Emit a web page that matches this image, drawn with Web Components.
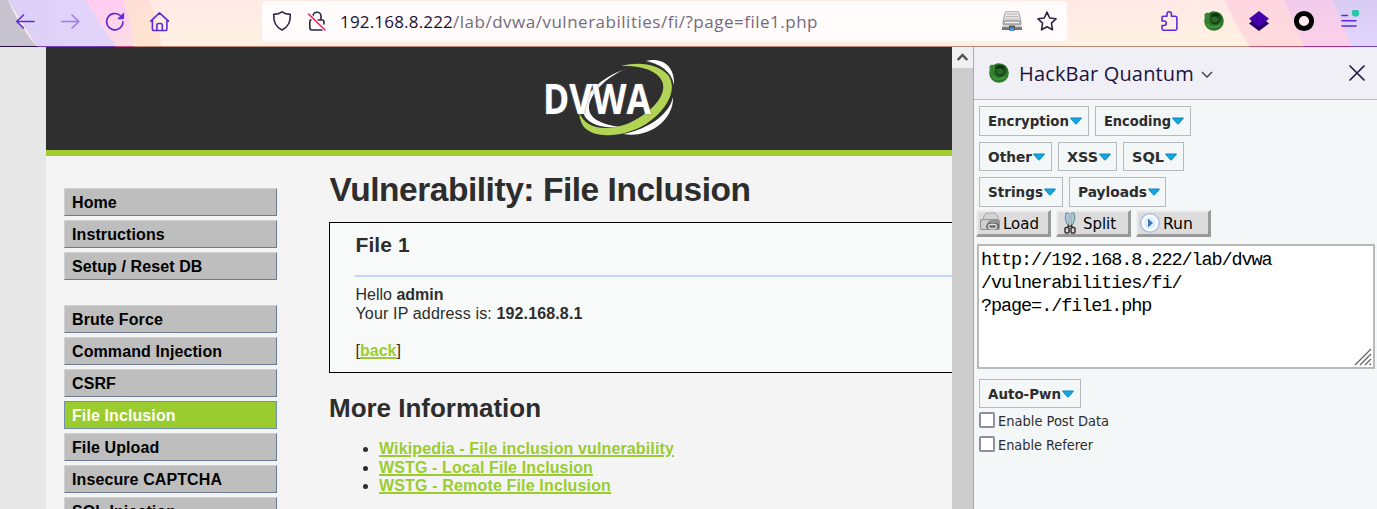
<!DOCTYPE html>
<html lang="en"><head><meta charset="utf-8"><title>DVWA</title>
<style>html,body{margin:0;height:100%;overflow:hidden}body{font-family:"Liberation Sans",Arial,sans-serif}</style></head>
<body><browser-window></browser-window>
<script>
const make=(name,html,after)=>customElements.define(name,class extends HTMLElement{
 connectedCallback(){ if(this.shadowRoot)return;
  const t=document.createElement('template');
  t.innerHTML=typeof html==='function'?html(this):html;
  this.attachShadow({mode:'open'}).append(t.content.cloneNode(true));
  if(after)after(this);
 }});

/* Single line of text fitted to a width, by tracking or, with "scale", by horizontal scaling */
make('fit-text','<style>:host{display:inline-block;white-space:pre;flex:none}span{display:inline-block;transform-origin:0 0}</style><span><slot></slot></span>',el=>{
 const s=el.shadowRoot.querySelector('span'),w=+el.getAttribute('w'),n=el.textContent.length,cur=s.getBoundingClientRect().width;
 el.style.width=w+'px';
 if(el.hasAttribute('scale'))s.style.transform=`scaleX(${w/cur})`;
 else s.style.letterSpacing=((w-cur)/n)+'px';
});

const P='fill="none" stroke="#5b2bd9" stroke-width="1.6" stroke-linecap="round" stroke-linejoin="round"';
const D='fill="none" stroke="#2b2545" stroke-width="1.6" stroke-linecap="round" stroke-linejoin="round"';
const icons={
back:`<g ${P}><path d="M20 11.500H3M9.500 5L2.700 11.500L9.500 18"/></g>`,
forward:`<g ${P} opacity=".5"><path d="M2.500 11.500H19.500M13 5L19.800 11.500L13 18"/></g>`,
reload:`<g ${P}><path d="M16.200 5.500A8.200 8.200 0 1 0 19 11.800"/></g><path d="M19.600 3.200V8.800H13.900z" fill="#5b2bd9" stroke="#5b2bd9" stroke-linejoin="round"/>`,
home:`<g ${P}><path d="M1.700 11.100L10.500 2.900L19.500 11.100M3.400 10V18.700Q3.400 20.500 5.200 20.500H16.100Q17.900 20.500 17.900 18.700V10M7.900 20.500V15.500Q7.900 13.500 9.500 13.500H11.700Q13.300 13.500 13.300 15.500V20.500"/></g>`,
shield:`<g ${D}><path d="M11 1.800C13.500 3.600 16.200 4.300 19.300 4.400C19.600 11 18 16.800 11 20C4 16.800 2.400 11 2.700 4.400C5.800 4.300 8.500 3.600 11 1.800Z"/></g>`,
lock:`<g ${D}><path d="M7 7V6.200A4 4 0 0 1 15 6.200V10M5 9.800Q3.800 10.200 3.800 11.800V17.800Q3.800 20 6 20H16Q18 20 18 18M18 14V12Q18 10 16 10H12"/></g><path d="M2.600 4L19 20" stroke="#fff" stroke-width="3.400"/><path d="M2.600 4L19 20" stroke="#f32050" stroke-width="1.600" stroke-linecap="round"/>`,
drive:`<path d="M3.500 3Q4 1 6 1H16Q18 1 18.500 3L20.500 11V14Q20.500 15.500 19 15.500H3Q1.500 15.500 1.500 14V11Z" fill="#a9a9a9"/><path d="M4.500 3Q5 1.700 6.500 1.700H15.500Q17 1.700 17.500 3L19 10H3Z" fill="#e6e6e6"/><path d="M5.500 4H16.500M5 6.500H17M4.500 9H17.500" stroke="#bbb"/><path d="M4 12.500H18" stroke="#eee" stroke-width="1.400"/><path d="M1 17H21V20H1Z" fill="#737373"/><path d="M1 17H21" stroke="#999"/><path d="M8 15.500H14V20.500H8Z" fill="#555"/><path d="M9 17.500H13V21H9Z" fill="#4795ef"/>`,
star:`<g ${D}><path d="M11 2.200L13.700 8L20 8.800L15.400 13.200L16.500 19.800L11 16.700L5.500 19.800L6.600 13.200L2 8.800L8.300 8Z"/></g>`,
puzzle:`<g ${P} stroke-width="1.5"><path d="M4 11V7.600Q4 6.300 5.300 6.300H9V4A2.200 2.200 0 0 1 13.400 4V6.300H17.300Q18.900 6.300 18.900 7.900V18.600Q18.900 20.200 17.300 20.200H5.600Q4 20.200 4 18.600V15.500H6A2.200 2.200 0 0 0 6 11Z"/></g>`,
orb:`<circle cx="11" cy="11" r="9.800" fill="#2f7a2c"/><path d="M1.500 4L4 2.500L6 3.500L9 1.500L17 3L18 6Q11 3 6 8Q3 12 5 16L2 13Z" fill="#37802f"/><path d="M7 4Q12 1 17 4.500Q19.500 8 18 11Q15 15.500 11 14.500Q7 13 7 9Z" fill="#1b4d1e"/><path d="M9 4Q13 2 17 5L15 7Q11 5 9 7Z" fill="#0f3213"/><path d="M8 8Q11 6 14 7.500L15.500 10Q14 12.500 11.500 12.500Q8 12 9 9.500Z" fill="#2c6b27"/><path d="M7.500 11Q10 15.500 15 12.500" fill="none" stroke="#12371a"/><path d="M4 14Q9 20 17.500 15" fill="none" stroke="#439a3b" stroke-width="1.500"/>`,
layers:`<path d="M1 13.500L4 11H18L21 13.500L11 21Z" fill="#240068"/><path d="M11 1L21 8.700L11 16.800L1 8.700Z" fill="#4500ac"/>`,
ring:`<circle cx="11" cy="11" r="7.600" fill="#ffe9ee" stroke="#000" stroke-width="5"/>`,
menu:`<g ${P} stroke-width="1.5"><path d="M4 5.500H9.500M4 10.800H18M4 16H18"/></g><circle cx="17.500" cy="2.900" r="3.700" fill="#25c7a4"/>`,
print:`<path d="M5 4L7 1H16L19 4V9H4Z" fill="#d2d2d2" stroke="#aaa"/><path d="M1 9Q1 7 3 7H18Q21 7 21 10V16Q21 18 19 18H3Q1 18 1 16Z" fill="#939393"/><path d="M2 10Q2 8 4 8H12Q8 9 8 12V17H3Q2 17 2 15Z" fill="#cfcfcf"/><path d="M9 17Q6 16 7.500 13Q9 10 13 11H17Q20 11 20 14Q20 17 17 17Z" fill="#666"/><rect x="9.500" y="12.500" width="8" height="4" rx="2" fill="none" stroke="#ddd" stroke-width="1.400"/>`,
scissors:`<path d="M7 1Q5 6 7.500 11L10 14L10.500 2Q8.500 0 7 1M15 1Q17 6 14.500 11L12 14L11.500 2Q13.500 0 15 1" fill="#a9c9d6" stroke="#567785" stroke-width=".8"/><path d="M11 2V14" stroke="#fff" stroke-width=".7"/><path d="M9 12L11 14L13 12L14 15H8Z" fill="#444"/><rect x="6" y="15.500" width="4" height="5.500" rx="1.300" fill="none" stroke="#333" stroke-width="1.500"/><rect x="12" y="15.500" width="4" height="5.500" rx="1.300" fill="none" stroke="#333" stroke-width="1.500"/>`,
play:`<circle cx="11" cy="11" r="9.300" fill="#f5f9fe" stroke="#afc3e5" stroke-width="1.600"/><circle cx="11" cy="11" r="7" fill="#e2edfa" stroke="#fff" stroke-width="2"/><path d="M9 6.500L14 11L9 15.500Z" fill="#3d79bd"/>`,
close:`<path d="M4 4L18 18M18 4L4 18" fill="none" stroke="#251c45" stroke-width="1.700" stroke-linecap="round"/>`,
chevron:`<path d="M6 9L11 14L16 9" fill="none" stroke="#3b3355" stroke-width="1.300"/>`,
up:`<path d="M5.700 13L10.500 8L15.300 13" fill="none" stroke="#505050" stroke-width="2.500"/>`
};
make('ui-icon',el=>`<style>:host{display:block;flex:none;width:22px;height:22px}svg{display:block}</style><svg width="22" height="22" viewBox="0 0 22 22">${icons[el.getAttribute('name')]}</svg>`);

make('tool-bar',`<style>
:host{display:grid;height:47px;overflow:hidden}
svg,.row{grid-area:1/1}
.row{display:flex;height:42px;padding-left:2px;z-index:1}
.c{width:45px;display:flex;justify-content:center;padding-top:10px;box-sizing:border-box;flex:none}
.url{margin:1px 79.500px 0 80px;width:805px;height:40px;background:#fffcfb;border-radius:4px;display:flex;align-items:flex-start;padding:9px 9px 0;box-sizing:border-box;flex:none}
.lk{margin-left:13px}.t{margin-left:12px;font:17px/23px "Open Sans","Noto Sans",sans-serif;color:#1b1038}
.dim{color:#736b80}.dr{margin-left:auto}.st{margin-left:13px}
</style>
<svg width="1377" height="47" viewBox="0 0 1377 47"><defs>
<linearGradient id="a" x2="0" y2="1"><stop stop-color="#ffe9e6"/><stop offset="1" stop-color="#fff2e2"/></linearGradient>
<linearGradient id="b"><stop stop-color="#dcd0f6"/><stop offset="1" stop-color="#e3d4fa"/></linearGradient>
<linearGradient id="c" x2="0" y2="1"><stop stop-color="#ffccf2"/><stop offset="1" stop-color="#fddde4"/></linearGradient>
<linearGradient id="d" x2="0" y2="1"><stop stop-color="#ffdfd9"/><stop offset="1" stop-color="#ffe4cf"/></linearGradient>
<linearGradient id="e" x2="0" y2="1"><stop stop-color="#ffd6e0"/><stop offset="1" stop-color="#ffdcdb"/></linearGradient>
<linearGradient id="f" x2="0" y2="1"><stop stop-color="#f2cbec"/><stop offset="1" stop-color="#fbd0e8"/></linearGradient>
<linearGradient id="g" x2="0" y2="1"><stop stop-color="#d8ccf3"/><stop offset="1" stop-color="#e2d5ff"/></linearGradient></defs>
<path fill="url(#a)" d="M0 0H1377V47H0z"/><path fill="url(#d)" d="M85 0H150Q158 20 162 47H110z"/><path fill="url(#c)" d="M84 0H123Q132 22 134 47H113z"/><path fill="url(#b)" d="M8 0H85L116 47H37z"/><path fill="#c8c4cf" d="M0 0H8Q17 22 37 47H0z"/>
<path fill="url(#e)" d="M1225 0H1377V47H1250Q1235 25 1225 0z"/><path fill="url(#f)" d="M1284 0H1377V47H1304z"/><path fill="url(#g)" d="M1333 0H1377V47H1352z"/>
<path d="M0 46.500H37" stroke="#28133f"/><path d="M37 46.500H116" stroke="#7240bd"/><path d="M116 46.500H134" stroke="#c3518b"/><path d="M134 46.500H1250" stroke="#bb8877"/><path d="M1250 46.500H1304" stroke="#c25472"/><path d="M1304 46.500H1352" stroke="#b22f8e"/><path d="M1352 46.500H1377" stroke="#6e43cd"/></svg>
<div class="row"><div class="c"><ui-icon name="back"></ui-icon></div><div class="c"><ui-icon name="forward"></ui-icon></div><div class="c"><ui-icon name="reload"></ui-icon></div><div class="c"><ui-icon name="home"></ui-icon></div>
<div class="url"><ui-icon name="shield"></ui-icon><ui-icon class="lk" name="lock"></ui-icon><div class="t"><fit-text w="113">192.168.8.222</fit-text><fit-text class="dim" w="365">/lab/dvwa/vulnerabilities/fi/?page=file1.php</fit-text></div><ui-icon class="dr" name="drive"></ui-icon><ui-icon class="st" name="star"></ui-icon></div>
<div class="c"><ui-icon name="puzzle"></ui-icon></div><div class="c"><ui-icon name="orb"></ui-icon></div><div class="c"><ui-icon name="layers"></ui-icon></div><div class="c"><ui-icon name="ring"></ui-icon></div><div class="c"><ui-icon name="menu"></ui-icon></div></div>`);

make('dvwa-logo',`<style>:host{display:grid;width:134px;height:78px}svg,.w{grid-area:1/1}.w{font:bold 41px/50px "Open Sans","Noto Sans",sans-serif;color:#fff;padding:14px 0 0 1px;z-index:1;text-shadow:0 0 2px #667}</style>
<svg width="134" height="78" viewBox="0 0 134 78"><path fill="#fff" d="M84 10C64 18 49 34 47 47C46 59 58 65 78 68C55 70 40 62 41 49C43 33 62 17 84 10Z"/><path fill="#b1d455" d="M79 7C99 2 117 6 126 16C136 30 126 50 104 65C79 80 48 80 40 65Q37 59 37 53C43 69 61 73 85 65C110 54 126 35 120 22C115 11 98 6 79 7Z"/><path fill="#fff" d="M104 2C121 -2 133 8 132 26C130 15 122 6 104 2ZM131 38C132 61 107 80 81 75C103 71 127 57 131 38Z"/></svg><div class="w"><fit-text scale w="108">DVWA</fit-text></div>`);

make('menu-item',`<style>:host{display:block;box-sizing:border-box;width:213px;height:28px;background:#bebebe;border:1px solid;border-color:#d0d0d0 #6c7a91 #6c7a91 #d0d0d0;padding-left:7px;font-weight:bold;font-size:16px;letter-spacing:.1px;line-height:28px;color:#000;flex:none}
:host([active]){background:#9acc30;color:#fffff0;border-color:#718fae}:host([first]){margin-top:21px}</style><slot></slot>`);

make('dvwa-page',`<style>
:host{display:grid;grid-template-rows:109px 1fr;background:#f4f4f4;margin-left:46px;overflow:hidden;color:#2d2d2d;min-width:0}
header{background:#2f2f2f;border-bottom:6px solid #a0cc31;display:flex;padding:12px 0 0 496px;box-sizing:border-box}
.b{display:flex;overflow:hidden;min-height:0}
nav{display:flex;flex-direction:column;gap:4px;padding:32px 0 0 18px;width:213px;flex:none}
main{margin-left:52px;width:700px;flex:none;font-size:16px;line-height:19px}
h1{font-size:33.500px;line-height:40px;margin:14px 0 12px;padding-left:.5px}
section{border:1px solid #000;background:#f8faf9;height:151px;box-sizing:border-box;padding:10px 25.500px;white-space:nowrap}
h2{font-size:21px;line-height:24px;margin:0;letter-spacing:.1px}
.l{height:2px;background:#c0d8ff;margin:18px 0 8px -.500px}
a{color:#9acc30;font-weight:bold;text-decoration:underline;text-decoration-thickness:2px;text-underline-offset:1px}
.s{margin-top:18px}h3{font-size:26px;line-height:30px;margin:20px 0 17px}
ul{margin:0;padding-left:50px;line-height:18.600px}
</style><header><dvwa-logo></dvwa-logo></header><div class="b"><nav><menu-item>Home</menu-item><menu-item>Instructions</menu-item><menu-item>Setup / Reset DB</menu-item><menu-item first>Brute Force</menu-item><menu-item>Command Injection</menu-item><menu-item>CSRF</menu-item><menu-item active>File Inclusion</menu-item><menu-item>File Upload</menu-item><menu-item>Insecure CAPTCHA</menu-item><menu-item>SQL Injection</menu-item></nav>
<main><h1><fit-text w="421">Vulnerability: File Inclusion</fit-text></h1><section><h2>File 1</h2><div class="l"></div><div>Hello <b>admin</b></div><div><fit-text w="141">Your IP address is: </fit-text><b><fit-text w="86">192.168.8.1</fit-text></b></div><div class="s">[<a>back</a>]</div></section>
<h3><fit-text w="212">More Information</fit-text></h3><ul><li><a><fit-text w="295"><u>Wikipedia - File inclusion vulnerability</u></fit-text></a></li><li><a><fit-text w="214"><u>WSTG - Local File Inclusion</u></fit-text></a></li><li><a><fit-text w="232"><u>WSTG - Remote File Inclusion</u></fit-text></a></li></ul></main></div>`.replace('.s{','u{text-decoration-thickness:2px;text-underline-offset:1px}li fit-text{vertical-align:top}li{height:18.600px}.s{'));

make('scroll-bar',`<style>:host{display:block;width:21px;background:#cdcdcd;border-right:1px solid #aaa8b0}div{background:#f0f0f0;height:21px;width:21px}</style><div><ui-icon name="up"></ui-icon></div>`);

make('drop-button',el=>`<style>:host{display:flex;box-sizing:border-box;border:1px solid #b5b9bb;height:30px;width:${el.getAttribute('bw')}px;padding-left:8px;font:bold 14.500px/29px "DejaVu Sans Condensed","DejaVu Sans",sans-serif;font-stretch:condensed;color:#2d2d2d;flex:none}:host([low]){height:29px}fit-text{height:27px}svg{margin-top:10px;flex:none}</style><fit-text scale w="${el.getAttribute('tw')}">${el.textContent}</fit-text><svg width="14" height="9" viewBox="0 0 14 9"><path d="M1.500 1H12.500L7.700 6.800Q7 7.300 6.300 6.800Z" fill="#12a6e2" stroke="#0c86bd" stroke-linejoin="round"/></svg>`);

make('action-button',el=>`<style>:host{display:flex;box-sizing:border-box;width:75px;height:27px;background:#dcdcdc;border:2px solid;border-color:#ededed #999 #999 #ededed;border-right-width:3px;border-bottom-width:3px;padding-left:1px;font:16.500px/24px "DejaVu Sans Condensed","DejaVu Sans",sans-serif;font-stretch:condensed;color:#000;flex:none}fit-text{margin-left:2px;height:22px}</style><ui-icon name="${el.getAttribute('icon')}"></ui-icon><fit-text scale w="${el.getAttribute('tw')}">${el.textContent}</fit-text>`);

make('check-row',`<style>:host{display:flex;height:24px;align-items:flex-start;font:14.500px/20px "DejaVu Sans Condensed","DejaVu Sans",sans-serif;font-stretch:condensed;color:#2d2d2d;gap:3px}i{width:16px;height:16px;box-sizing:border-box;border:2px solid #8f8f9d;border-radius:2px;background:#fff;margin-top:1px}</style><i></i><slot></slot>`);

make('hack-bar',`<style>
:host{display:block;background:#f3f7f8;overflow:hidden;min-width:0}
header{display:flex;height:53px;box-sizing:border-box;background:#f0eff5;border-bottom:1px solid #bab8c2;padding:15px 9px 0 14px;font:20px/24px "Open Sans","Noto Sans",sans-serif;color:#20123e}
header fit-text{margin-left:9px}header .x{margin-left:auto}.v{margin:1px 0 0 2px}
.r{display:flex;gap:6px;margin-left:5px}.r1{margin-top:6px}.r2{margin-top:6px}
.act{display:flex;gap:5px;margin:3px 0 0 2px}
.ta{display:grid;box-sizing:border-box;width:398px;height:125px;margin:7px 0 10px 3px;border:2px solid #b9b9b9;background:#fff;padding:3px 2px 0;font:18.500px/23px "Liberation Mono",monospace;letter-spacing:-1.080px;color:#000;white-space:pre;grid-template-rows:1fr auto}
.ta svg{justify-self:end;margin-right:-2px}
.ck{margin:3px 0 0 4.500px}
</style><header><ui-icon name="orb"></ui-icon><fit-text w="175">HackBar Quantum</fit-text><ui-icon class="v" name="chevron"></ui-icon><ui-icon class="x" name="close"></ui-icon></header>
<div class="r r1"><drop-button bw="110" tw="81">Encryption</drop-button><drop-button bw="96" tw="67">Encoding</drop-button></div>
<div class="r r2"><drop-button low bw="73" tw="44">Other</drop-button><drop-button low bw="59" tw="31">XSS</drop-button><drop-button low bw="61" tw="32">SQL</drop-button></div>
<div class="r r2"><drop-button bw="84" tw="55">Strings</drop-button><drop-button bw="97" tw="69">Payloads</drop-button></div>
<div class="act"><action-button icon="print" tw="36">Load</action-button><action-button icon="scissors" tw="33">Split</action-button><action-button icon="play" tw="30">Run</action-button></div>
<div class="ta"><div>http://192.168.8.222/lab/dvwa
/vulnerabilities/fi/
?page=./file1.php</div><svg width="20" height="20" viewBox="0 0 20 20"><path d="M2 18L18 2M7 18L18 7M12 18L18 12M16.500 18L18 16.500" stroke="#666" stroke-width="1.300"/></svg></div>
<div class="r"><drop-button low bw="102" tw="73">Auto-Pwn</drop-button></div>
<div class="ck"><check-row><fit-text scale w="111">Enable Post Data</fit-text></check-row><check-row><fit-text scale w="95">Enable Referer</fit-text></check-row></div>`);

make('browser-window',`<style>:host{display:grid;grid-template-rows:47px 462px;width:1377px;height:509px;overflow:hidden;background:#e7e7e7}.m{display:grid;grid-template-columns:952px 22px 403px;min-height:0}</style><tool-bar></tool-bar><div class="m"><dvwa-page></dvwa-page><scroll-bar></scroll-bar><hack-bar></hack-bar></div>`);
</script></body></html>
